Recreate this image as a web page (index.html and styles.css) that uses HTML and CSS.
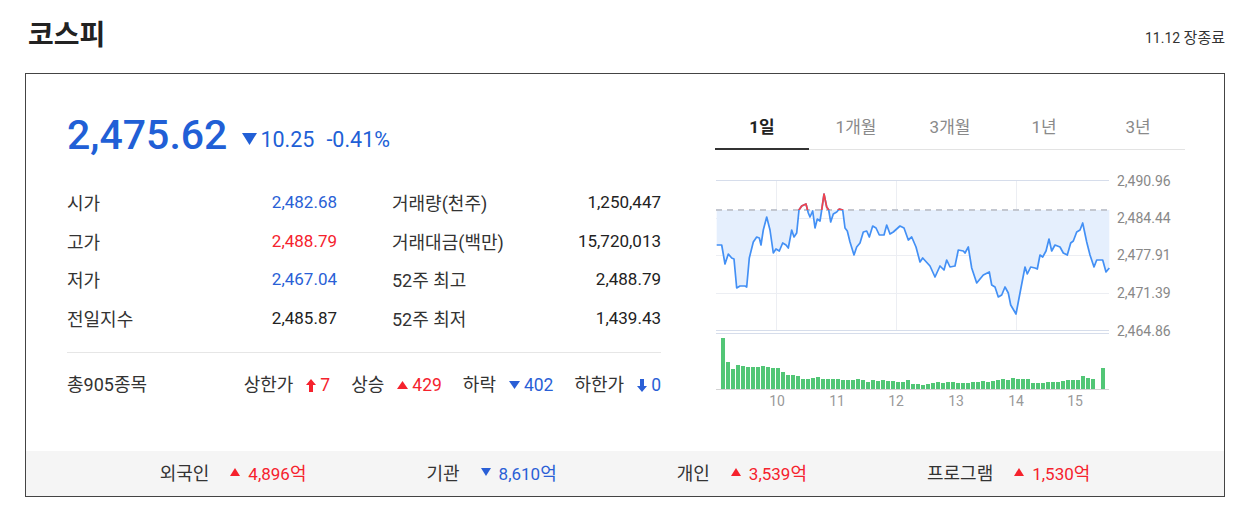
FILE: index.html
```html
<!DOCTYPE html>
<html lang="ko">
<head>
<meta charset="utf-8">
<title>코스피</title>
<link rel="stylesheet" href="styles.css">
</head>
<body>
<div class="wrap">
  <header class="head">
    <h1 class="title">코스피</h1>
    <span class="date">11.12 <span class="ko">장종료</span></span>
  </header>
  <section class="box">
    <div class="main">
      <div class="info">
        <div class="price-row"><span class="price">2,475.62</span><span class="chg"><svg class="tri-big" width="15" height="12" viewBox="0 0 15 12"><path d="M0 0H15L7.5 12Z"/></svg>10.25</span><span class="pct">-0.41%</span></div>
        <dl class="stats">
          <div class="stat"><dt>시가</dt><dd class="blue">2,482.68</dd></div>
          <div class="stat"><dt>거래량(천주)</dt><dd>1,250,447</dd></div>
          <div class="stat"><dt>고가</dt><dd class="red">2,488.79</dd></div>
          <div class="stat"><dt>거래대금(백만)</dt><dd>15,720,013</dd></div>
          <div class="stat"><dt>저가</dt><dd class="blue">2,467.04</dd></div>
          <div class="stat"><dt>52주 최고</dt><dd>2,488.79</dd></div>
          <div class="stat"><dt>전일지수</dt><dd>2,485.87</dd></div>
          <div class="stat"><dt>52주 최저</dt><dd>1,439.43</dd></div>
        </dl>
        <div class="breadth">
          <span class="total">총905종목</span>
          <div class="counts">
            <span class="cnt"><span class="lbl">상한가</span><svg class="ico up" width="10" height="13" viewBox="0 0 10 13"><path d="M5 0L10 6H7V13H3V6H0Z"/></svg><span class="num red">7</span></span>
            <span class="cnt"><span class="lbl">상승</span><svg class="ico up" width="11" height="8" viewBox="0 0 11 8"><path d="M5.5 0L11 8H0Z"/></svg><span class="num red">429</span></span>
            <span class="cnt"><span class="lbl">하락</span><svg class="ico dn" width="11" height="8" viewBox="0 0 11 8"><path d="M0 0H11L5.5 8Z"/></svg><span class="num blue">402</span></span>
            <span class="cnt"><span class="lbl">하한가</span><svg class="ico dn" width="10" height="13" viewBox="0 0 10 13"><path d="M5 13L10 7H7V0H3V7H0Z"/></svg><span class="num blue">0</span></span>
          </div>
        </div>
      </div>
      <div class="chart">
        <ul class="tabs">
          <li class="tab on">1일</li>
          <li class="tab">1개월</li>
          <li class="tab">3개월</li>
          <li class="tab">1년</li>
          <li class="tab">3년</li>
        </ul>
        <svg class="plot" width="470" height="265" viewBox="715 150 470 265">
          <defs>
            <clipPath id="below"><rect x="700" y="210" width="420" height="130"/></clipPath>
            <clipPath id="above"><rect x="700" y="150" width="420" height="60"/></clipPath>
          </defs>
          <line class="gl-strong" x1="716" y1="180.5" x2="1109" y2="180.5"/>
          <line class="gl" x1="716" y1="218.5" x2="1109" y2="218.5"/>
          <line class="gl" x1="716" y1="255.5" x2="1109" y2="255.5"/>
          <line class="gl" x1="716" y1="293.5" x2="1109" y2="293.5"/>
          <line class="gl" x1="776.5" y1="181" x2="776.5" y2="330"/>
          <line class="gl" x1="896.5" y1="181" x2="896.5" y2="330"/>
          <line class="gl" x1="1016.5" y1="181" x2="1016.5" y2="330"/>
          <line class="gl-strong" x1="716" y1="330.5" x2="1109" y2="330.5"/>
          <line class="gl-strong" x1="716" y1="333.5" x2="1109" y2="333.5"/>
          <polygon class="area" clip-path="url(#below)" points="716.7,210 716.7,245 721.7,245 725,264 728.3,254 731.7,258 734,259 736.7,288 740,286 745,286 746.7,287 749.3,258 753.3,242 756.7,237 759.3,238 761,245 763.3,230 766.7,217 770,230 773.3,253 776,249 779.3,251 782.7,243 786,245 788.3,248 791.7,230 794,237 796.7,233 799,210 801.7,206 806,204 808.3,213 810,217 812.7,211 815,228 817.3,219 820,221 821.7,210 824,194 826.7,207 828.7,210 830.7,222 833.3,214 836.7,212 839.3,209 842.7,210 845,228 847.3,231 850,242 854,255 856.7,247 860,243 863.3,232 866.7,231 869.3,237 872.7,226 876,228 879.3,235 884,235 886.7,225 890,234 893.3,232 900,226 904,228 908.3,240 911.7,237 916,247 920,262 922.7,258 930,266 935,277 940,266 944,270 946.7,260 950,267 955,266 958.3,250 963.3,251 965,253 968.3,247 971.7,268 976.7,283 983.3,275 989.3,272 991.7,285 995,287 998.3,297 1001.7,295 1005,287 1008.3,293 1010.7,305 1016,314 1020,293 1025,267 1027.3,274 1030.7,267 1035,268 1037.3,269 1040,255 1042.7,257 1046,251 1049,239 1051.7,251 1055,245 1060,247 1063.3,253 1067.3,255 1070.7,243 1073.3,241 1076.7,232 1080,230 1082.7,223 1086.7,242 1090,255 1094,267 1096.7,260 1102.7,260 1106,272 1109.3,268 1109.3,210"/>
          <line class="prev" x1="716" y1="210" x2="1109" y2="210"/>
          <polyline class="line" points="716.7,245 721.7,245 725,264 728.3,254 731.7,258 734,259 736.7,288 740,286 745,286 746.7,287 749.3,258 753.3,242 756.7,237 759.3,238 761,245 763.3,230 766.7,217 770,230 773.3,253 776,249 779.3,251 782.7,243 786,245 788.3,248 791.7,230 794,237 796.7,233 799,210 801.7,206 806,204 808.3,213 810,217 812.7,211 815,228 817.3,219 820,221 821.7,210 824,194 826.7,207 828.7,210 830.7,222 833.3,214 836.7,212 839.3,209 842.7,210 845,228 847.3,231 850,242 854,255 856.7,247 860,243 863.3,232 866.7,231 869.3,237 872.7,226 876,228 879.3,235 884,235 886.7,225 890,234 893.3,232 900,226 904,228 908.3,240 911.7,237 916,247 920,262 922.7,258 930,266 935,277 940,266 944,270 946.7,260 950,267 955,266 958.3,250 963.3,251 965,253 968.3,247 971.7,268 976.7,283 983.3,275 989.3,272 991.7,285 995,287 998.3,297 1001.7,295 1005,287 1008.3,293 1010.7,305 1016,314 1020,293 1025,267 1027.3,274 1030.7,267 1035,268 1037.3,269 1040,255 1042.7,257 1046,251 1049,239 1051.7,251 1055,245 1060,247 1063.3,253 1067.3,255 1070.7,243 1073.3,241 1076.7,232 1080,230 1082.7,223 1086.7,242 1090,255 1094,267 1096.7,260 1102.7,260 1106,272 1109.3,268"/>
          <polyline class="line up-line" clip-path="url(#above)" points="796.7,233 799,210 801.7,206 806,204 808.3,213 810,217 812.7,211 815,228 817.3,219 820,221 821.7,210 824,194 826.7,207 828.7,210 830.7,222 833.3,214 836.7,212 839.3,209 842.7,210 845,228"/>
          <path class="vol" d="M721 389h4v-51h-4zM726 389h4v-27h-4zM731 389h4v-20h-4zM736 389h4v-24h-4zM741 389h4v-23h-4zM746 389h4v-22h-4zM751 389h4v-22h-4zM756 389h4v-22h-4zM761 389h4v-23h-4zM766 389h4v-22h-4zM771 389h4v-21h-4zM776 389h4v-21h-4zM781 389h4v-17h-4zM786 389h4v-14h-4zM791 389h4v-14h-4zM796 389h4v-13h-4zM801 389h4v-10h-4zM806 389h4v-10h-4zM811 389h4v-11h-4zM816 389h4v-12h-4zM821 389h4v-10h-4zM826 389h4v-10h-4zM831 389h4v-10h-4zM836 389h4v-10h-4zM841 389h4v-9h-4zM846 389h4v-9h-4zM851 389h4v-9h-4zM856 389h4v-10h-4zM861 389h4v-9h-4zM866 389h4v-7h-4zM871 389h4v-9h-4zM876 389h4v-8h-4zM881 389h4v-9h-4zM886 389h4v-8h-4zM891 389h4v-8h-4zM896 389h4v-7h-4zM901 389h4v-7h-4zM906 389h4v-9h-4zM911 389h4v-5h-4zM916 389h4v-5h-4zM921 389h4v-4h-4zM926 389h4v-5h-4zM931 389h4v-6h-4zM936 389h4v-7h-4zM941 389h4v-6h-4zM946 389h4v-7h-4zM951 389h4v-7h-4zM956 389h4v-6h-4zM961 389h4v-6h-4zM966 389h4v-6h-4zM971 389h4v-7h-4zM976 389h4v-7h-4zM981 389h4v-8h-4zM986 389h4v-7h-4zM991 389h4v-8h-4zM996 389h4v-9h-4zM1001 389h4v-10h-4zM1006 389h4v-9h-4zM1011 389h4v-11h-4zM1016 389h4v-10h-4zM1021 389h4v-10h-4zM1026 389h4v-10h-4zM1031 389h4v-6h-4zM1036 389h4v-6h-4zM1041 389h4v-6h-4zM1046 389h4v-7h-4zM1051 389h4v-7h-4zM1056 389h4v-7h-4zM1061 389h4v-8h-4zM1066 389h4v-9h-4zM1071 389h4v-9h-4zM1076 389h4v-9h-4zM1081 389h4v-13h-4zM1086 389h4v-11h-4zM1091 389h4v-10h-4zM1101 389h4v-21h-4z"/>
          <line class="vbase" x1="716" y1="389.5" x2="1109" y2="389.5"/>
          <g class="ylab">
            <text x="1117" y="186">2,490.96</text>
            <text x="1117" y="223">2,484.44</text>
            <text x="1117" y="260">2,477.91</text>
            <text x="1117" y="298">2,471.39</text>
            <text x="1117" y="336">2,464.86</text>
          </g>
          <g class="xlab">
            <text x="777" y="406">10</text>
            <text x="837" y="406">11</text>
            <text x="896" y="406">12</text>
            <text x="956" y="406">13</text>
            <text x="1016" y="406">14</text>
            <text x="1075" y="406">15</text>
          </g>
        </svg>
      </div>
    </div>
    <div class="flows">
      <div class="flow"><span class="lbl">외국인</span><svg class="ico up" width="10" height="8" viewBox="0 0 10 8"><path d="M5 0L10 8H0Z"/></svg><span class="red">4,896<span class="unit">억</span></span></div>
      <div class="flow"><span class="lbl">기관</span><svg class="ico dn" width="10" height="8" viewBox="0 0 10 8"><path d="M0 0H10L5 8Z"/></svg><span class="blue">8,610<span class="unit">억</span></span></div>
      <div class="flow"><span class="lbl">개인</span><svg class="ico up" width="10" height="8" viewBox="0 0 10 8"><path d="M5 0L10 8H0Z"/></svg><span class="red">3,539<span class="unit">억</span></span></div>
      <div class="flow"><span class="lbl">프로그램</span><svg class="ico up" width="10" height="8" viewBox="0 0 10 8"><path d="M5 0L10 8H0Z"/></svg><span class="red">1,530<span class="unit">억</span></span></div>
    </div>
  </section>
</div>
</body>
</html>
```

FILE: styles.css
```css
* { box-sizing: border-box; margin: 0; padding: 0; }
body {
  font-family: Roboto, "Noto Sans CJK KR", sans-serif;
  color: #222;
  background: #fff;
}
.wrap { width: 1200px; margin-left: 25px; }

.head {
  height: 73px;
  display: flex;
  justify-content: space-between;
  align-items: flex-start;
}
.title {
  font-family: "Noto Sans CJK KR", sans-serif;
  font-size: 28px;
  font-weight: 700;
  line-height: 36px;
  margin-top: 15px;
  padding-left: 3px;
  color: #222;
}
.date {
  font-size: 14px;
  line-height: 20px;
  margin-top: 28px;
  color: #333;
}
.date .ko { font-size: 15px; }

.box { border: 1px solid #444; }
.main {
  height: 377px;
  display: flex;
  gap: 54px;
  padding: 33px 39px 0 41px;
}

.info { width: 594px; padding-top: 3px; }
.price-row {
  height: 50px;
  line-height: 50px;
  color: #215fd6;
  white-space: nowrap;
}
.price { font-size: 41px; font-weight: 500; }
.chg {
  font-size: 21.5px;
  margin-left: 15px;
  vertical-align: 2px;
}
.tri-big { fill: #215fd6; vertical-align: 2px; margin-right: 3px; }
.pct { font-size: 21.5px; margin-left: 12px; vertical-align: 2px; }

.stats {
  display: grid;
  grid-template-columns: 270px 269px;
  column-gap: 55px;
  grid-auto-rows: 38.5px;
  margin-top: 23px;
}
.stat {
  display: flex;
  justify-content: space-between;
  align-items: center;
  font-size: 17px;
}
.stat dt { color: #333; font-size: 18px; }
.stat dd { color: #222; }
.stat dd.blue { color: #2a5fd6; }
.stat dd.red { color: #f5222d; }

.blue { color: #2a5fd6; }
.red { color: #f5222d; }

.breadth {
  margin-top: 15px;
  border-top: 1px solid #e6e6e6;
  padding-top: 21px;
  display: flex;
  justify-content: space-between;
  font-size: 18px;
  line-height: 22px;
  color: #333;
}
.counts { display: flex; gap: 21px; }
.cnt { display: flex; align-items: center; }
.cnt .lbl { margin-right: 13px; }
.cnt .ico { margin-right: 4px; }
.cnt .num { font-size: 17.5px; }
.ico.up { fill: #f5222d; }
.ico.dn { fill: #2a5fd6; }

.chart { width: 470px; }
.tabs {
  display: flex;
  list-style: none;
  border-bottom: 1px solid #e3e3e3;
}
.tab {
  flex: 1;
  text-align: center;
  font-size: 17px;
  line-height: 41px;
  padding-bottom: 1px;
  color: #8a8a8a;
}
.tab.on {
  color: #222;
  font-weight: 700;
  border-bottom: 2px solid #333;
  padding-bottom: 0;
  margin-bottom: -1px;
}
.plot { display: block; }
.gl { stroke: #eceef3; stroke-width: 1; }
.gl-strong { stroke: #d6ddeb; stroke-width: 1; }
.area { fill: #e5effd; }
.prev { stroke: #c3c7d0; stroke-width: 2; stroke-dasharray: 6 5; }
.line { fill: none; stroke: #4390f5; stroke-width: 1.7; stroke-linejoin: round; }
.up-line { stroke: #f2434b; }
.vol { fill: #52c676; }
.vbase { stroke: #d3d3d3; stroke-width: 1; }
.ylab text { font-family: Roboto, sans-serif; font-size: 14px; fill: #888; }
.xlab text { font-family: Roboto, sans-serif; font-size: 14px; fill: #999; text-anchor: middle; }

.flows {
  height: 45px;
  background: #f5f5f5;
  display: flex;
  justify-content: center;
  align-items: center;
  gap: 120px;
  padding-bottom: 4px;
  font-size: 17px;
}
.flow { display: flex; align-items: center; }
.flow .lbl { color: #333; margin-right: 21px; font-size: 18px; }
.flow .ico { margin-right: 8px; }
.flow .unit { font-size: 18px; }
```
